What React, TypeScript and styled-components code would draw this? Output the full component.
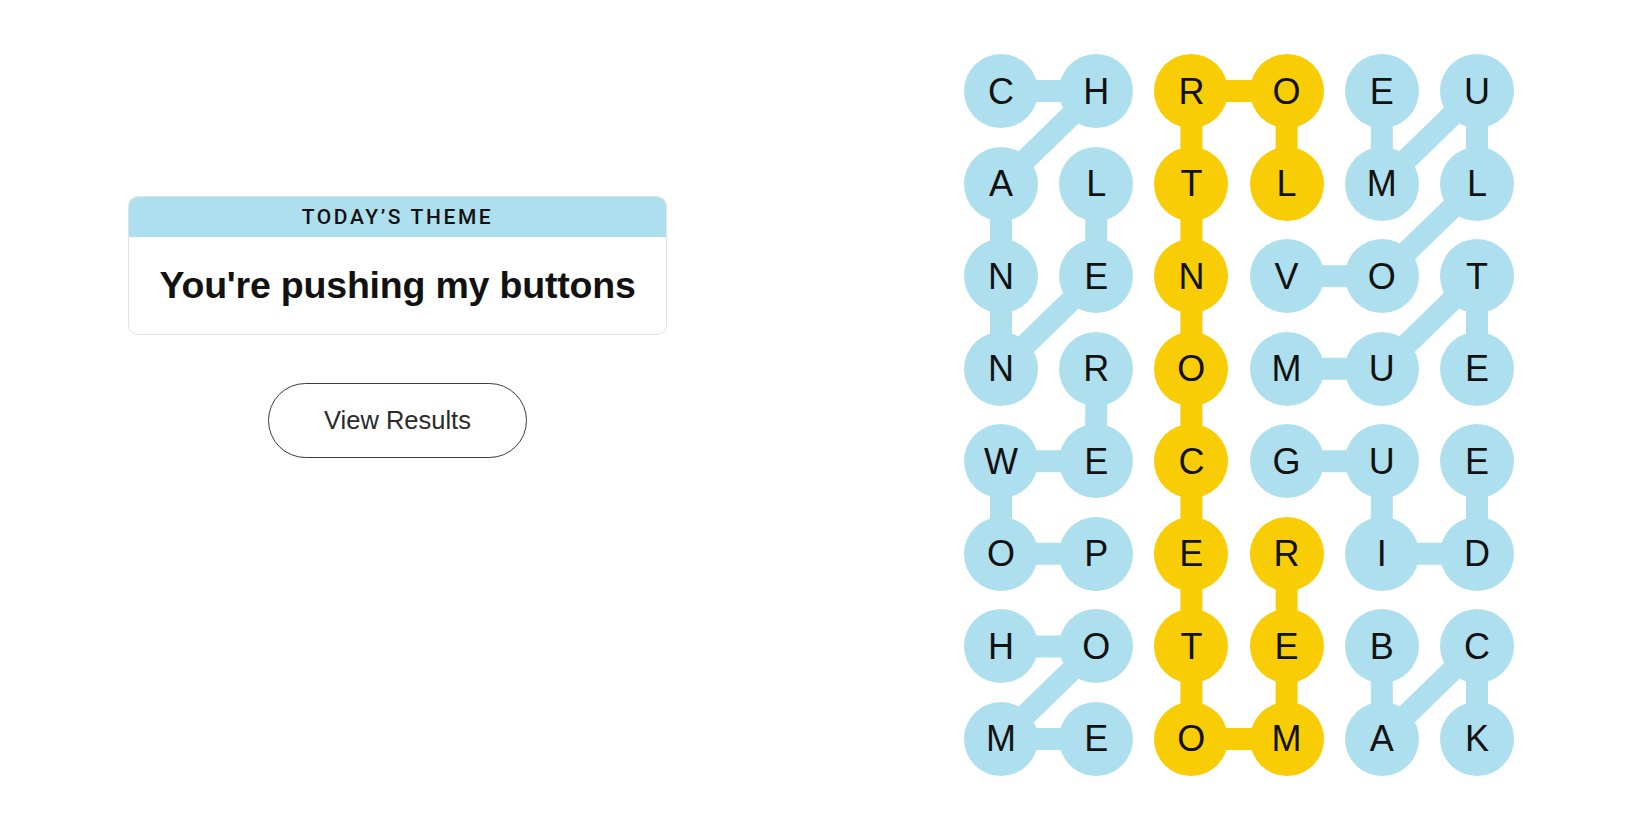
import React from 'react';
import styled, { createGlobalStyle } from 'styled-components';

const GlobalStyle = createGlobalStyle`
	html, body {
		margin: 0;
		padding: 0;
		background: #ffffff;
	}
	body {
		font-family: 'Liberation Sans', Arial, sans-serif;
		color: #121212;
	}
`;

const BLUE = '#aedfee';
const YELLOW = '#f8cd05';

const CELL = 74;
const COL_GAP = 21.2;
const ROW_GAP = 18.57;
const COLS = 6;
const ROWS = 8;
const LINK_WIDTH = 22;
const BOARD_W = COLS * CELL + (COLS - 1) * COL_GAP;
const BOARD_H = ROWS * CELL + (ROWS - 1) * ROW_GAP;

const LETTERS = [
	'CHROEU',
	'ALTLML',
	'NENVOT',
	'NROMUE',
	'WECGUE',
	'OPERID',
	'HOTEBC',
	'MEOMAK'
];

// each word is a path of [row, col] cells
const WORDS: { cells: [number, number][]; spangram?: boolean }[] = [
	{ cells: [[0, 0], [0, 1], [1, 0], [2, 0], [3, 0], [2, 1], [1, 1]] },
	{
		spangram: true,
		cells: [
			[5, 3], [6, 3], [7, 3], [7, 2], [6, 2], [5, 2], [4, 2],
			[3, 2], [2, 2], [1, 2], [0, 2], [0, 3], [1, 3]
		]
	},
	{ cells: [[2, 3], [2, 4], [1, 5], [0, 5], [1, 4], [0, 4]] },
	{ cells: [[3, 3], [3, 4], [2, 5], [3, 5]] },
	{ cells: [[4, 3], [4, 4], [5, 4], [5, 5], [4, 5]] },
	{ cells: [[6, 4], [7, 4], [6, 5], [7, 5]] },
	{ cells: [[5, 1], [5, 0], [4, 0], [4, 1], [3, 1]] },
	{ cells: [[6, 0], [6, 1], [7, 0], [7, 1]] }
];

const spangramCells = new Set(
	WORDS.filter((w) => w.spangram)
		.flatMap((w) => w.cells)
		.map(([r, c]) => `${r}-${c}`)
);

const Page = styled.main`
	display: flex;
	align-items: flex-start;
	padding: 54px 0 0 128px;
	min-height: 825px;
	box-sizing: border-box;
`;

const LeftPanel = styled.section`
	width: 539px;
	margin-top: 142px;
	display: flex;
	flex-direction: column;
	align-items: center;
	gap: 48px;
`;

const ThemeCard = styled.div`
	width: 100%;
	border: 1px solid #e2e2e2;
	border-radius: 10px;
	overflow: hidden;
	box-sizing: border-box;
`;

const ThemeHeader = styled.div`
	height: 40px;
	background: ${BLUE};
	display: flex;
	align-items: center;
	justify-content: center;
	font-family: Roboto, 'Liberation Sans', sans-serif;
	font-weight: 500;
	font-size: 21px;
	letter-spacing: 2.6px;
	color: #121212;
`;

const ThemeBody = styled.div`
	height: 97px;
	display: flex;
	align-items: center;
	justify-content: center;
	font-family: 'Liberation Sans', Arial, sans-serif;
	font-weight: 700;
	font-size: 37.5px;
	letter-spacing: -0.2px;
	color: #121212;
`;

const ResultsButton = styled.button`
	width: 259px;
	height: 75px;
	border: 1px solid #3a3a3a;
	border-radius: 38px;
	background: #ffffff;
	font-family: 'Liberation Sans', Arial, sans-serif;
	font-size: 25.5px;
	color: #2a2a2a;
	cursor: pointer;
`;

const Board = styled.div`
	position: relative;
	margin-left: 297px;
	width: ${BOARD_W}px;
	height: ${BOARD_H}px;
`;

const Links = styled.svg`
	position: absolute;
	inset: 0;
	z-index: 0;
`;

const LetterGrid = styled.div`
	position: relative;
	z-index: 1;
	display: grid;
	grid-template-columns: repeat(${COLS}, ${CELL}px);
	grid-template-rows: repeat(${ROWS}, ${CELL}px);
	column-gap: ${COL_GAP}px;
	row-gap: ${ROW_GAP}px;
`;

const Letter = styled.div<{ $spangram: boolean }>`
	width: ${CELL}px;
	height: ${CELL}px;
	border-radius: 50%;
	background: ${(p) => (p.$spangram ? YELLOW : BLUE)};
	display: flex;
	align-items: center;
	justify-content: center;
	font-family: 'Liberation Sans', Arial, sans-serif;
	font-size: 36px;
	line-height: 1;
	color: #121212;
	padding-top: 1px;
	box-sizing: border-box;
`;

const cx = (c: number) => CELL / 2 + c * (CELL + COL_GAP);
const cy = (r: number) => CELL / 2 + r * (CELL + ROW_GAP);

export default function App(): JSX.Element {
	return (
		<>
			<GlobalStyle />
			<Page>
				<LeftPanel>
					<ThemeCard>
						<ThemeHeader>TODAY’S THEME</ThemeHeader>
						<ThemeBody>You're pushing my buttons</ThemeBody>
					</ThemeCard>
					<ResultsButton>View Results</ResultsButton>
				</LeftPanel>
				<Board>
					<Links width={BOARD_W} height={BOARD_H}>
						{WORDS.map((word, wi) =>
							word.cells.slice(1).map(([r, c], i) => {
								const [pr, pc] = word.cells[i];
								return (
									<line
										key={`${wi}-${i}`}
										x1={cx(pc)}
										y1={cy(pr)}
										x2={cx(c)}
										y2={cy(r)}
										stroke={word.spangram ? YELLOW : BLUE}
										strokeWidth={LINK_WIDTH}
									/>
								);
							})
						)}
					</Links>
					<LetterGrid>
						{LETTERS.map((row, r) =>
							row.split('').map((ch, c) => (
								<Letter key={`${r}-${c}`} $spangram={spangramCells.has(`${r}-${c}`)}>
									{ch}
								</Letter>
							))
						)}
					</LetterGrid>
				</Board>
			</Page>
		</>
	);
}
